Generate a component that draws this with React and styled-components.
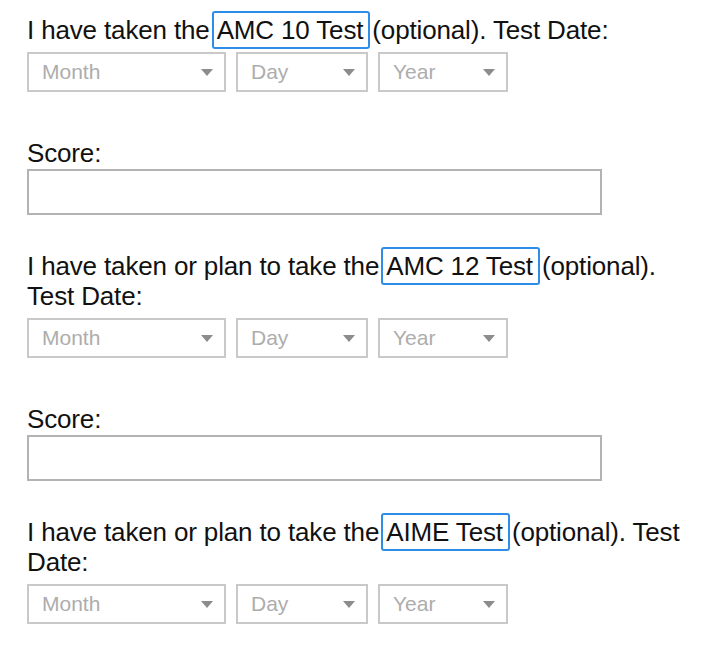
import React from "react";
import styled, { createGlobalStyle } from "styled-components";

const GlobalStyle = createGlobalStyle`
  body {
    margin: 0;
    background: #fff;
    font-family: "Liberation Sans", Arial, sans-serif;
  }
`;

const tests = [
  { before: "I have taken the", name: "AMC 10 Test", after: "(optional). Test Date:", score: true },
  { before: "I have taken or plan to take the", name: "AMC 12 Test", after: "(optional). Test Date:", score: true },
  { before: "I have taken or plan to take the", name: "AIME Test", after: "(optional). Test Date:", score: false },
];

const Caret = () => (
  <svg width="12" height="7" viewBox="0 0 12 7">
    <path d="M0 0 L12 0 L6 7 Z" fill="#8c8c8c" />
  </svg>
);

const App = () => {
  return (
    <Page>
      <GlobalStyle />
      {tests.map((t, i) => (
        <Section key={i}>
          <Question>
            {t.before}
            <Highlight>{t.name}</Highlight>
            {t.after}
          </Question>
          <DateRow>
            <SelectBox width={199}>
              <span>Month</span>
              <Caret />
            </SelectBox>
            <SelectBox width={132}>
              <span>Day</span>
              <Caret />
            </SelectBox>
            <SelectBox width={130}>
              <span>Year</span>
              <Caret />
            </SelectBox>
          </DateRow>
          {t.score && (
            <ScoreField>
              <FieldLabel>Score:</FieldLabel>
              <ScoreInput type="text" />
            </ScoreField>
          )}
        </Section>
      ))}
    </Page>
  );
};

export default App;

const Page = styled.div`
  width: 701px;
  box-sizing: border-box;
  padding: 15px 8px 0 27px;
  color: #111;
`;

const Section = styled.section`
  margin-bottom: 36px;
`;

const Question = styled.p`
  margin: 0;
  font-size: 26px;
  line-height: 30px;
  letter-spacing: -0.15px;
`;

const Highlight = styled.span`
  border: 2px solid #2e8de6;
  border-radius: 3px;
  padding: 2px 5px 2px 3px;
  margin: 0 2px;
`;

const DateRow = styled.div`
  display: flex;
  gap: 10px;
  margin-top: 7px;
`;

const SelectBox = styled.div`
  width: ${(p) => p.width}px;
  height: 40px;
  box-sizing: border-box;
  border: 2px solid #c9c9c9;
  display: flex;
  align-items: center;
  justify-content: space-between;
  padding: 0 11px 0 13px;
  font-size: 21px;
  color: #adadad;
`;

const ScoreField = styled.div`
  margin-top: 46px;
`;

const FieldLabel = styled.div`
  font-size: 26px;
  line-height: 30px;
  letter-spacing: -0.15px;
`;

const ScoreInput = styled.input`
  display: block;
  width: 575px;
  height: 46px;
  box-sizing: border-box;
  margin: 1px 0 0;
  border: 2px solid #b3b3b3;
  border-radius: 0;
  outline: none;
  background: #fff;
`;
